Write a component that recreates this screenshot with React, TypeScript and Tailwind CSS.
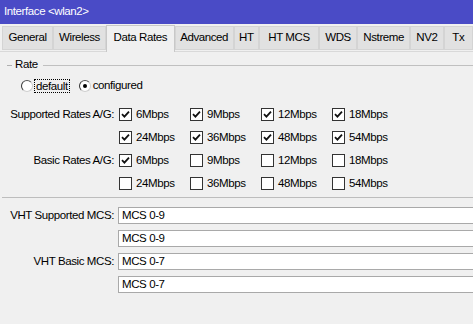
import React from "react";

const font = { fontFamily: '"Liberation Sans", Arial, sans-serif', letterSpacing: "-0.4px" };

function Check({ checked }: { checked: boolean }) {
  return (
    <div className="w-[13px] h-[13px] border border-[#333333] bg-white flex items-center justify-center shrink-0">
      {checked && (
        <svg width="9" height="9" viewBox="0 0 9 9">
          <path d="M1 4.2 L3.4 6.6 L8 1.6" fill="none" stroke="#111" strokeWidth="1.8" />
        </svg>
      )}
    </div>
  );
}

function CB({ checked, label }: { checked: boolean; label: string }) {
  return (
    <div className="flex items-center gap-[4px] w-[71px]">
      <Check checked={checked} />
      <span>{label}</span>
    </div>
  );
}

const tabs = ["General", "Wireless", "Data Rates", "Advanced", "HT", "HT MCS", "WDS", "Nstreme", "NV2", "Tx"];
const tabW = [52, 54, 69, 60, 26, 61, 39, 54, 34, 30];

function RateRow({ label, values }: { label: string; values: [string, boolean][] }) {
  return (
    <div className="flex items-center h-[23px]">
      <div className="w-[116px] pr-[2px] text-right whitespace-nowrap">{label}</div>
      <div className="flex ml-[3px]">
        {values.map(([l, c]) => (
          <CB key={l} label={l} checked={c} />
        ))}
      </div>
    </div>
  );
}

function Field({ label, value }: { label: string; value: string }) {
  return (
    <div className="flex items-center h-[23px]">
      <div className="w-[116px] pr-[2px] text-right whitespace-nowrap">{label}</div>
      <div className="ml-[2px] flex-1 h-[17px] bg-white border border-[#a9a9a9] border-r-0 flex items-center pl-[3px]">
        {value}
      </div>
    </div>
  );
}

export default function App() {
  return (
    <div className="w-[473px] h-[324px] bg-[#f0f0f0] text-[11.5px] text-black overflow-hidden" style={font}>
      <div className="h-[24px] bg-[#4a4bc6] text-white flex items-center pl-[4px]">Interface &lt;wlan2&gt;</div>
      <div className="h-[28px] flex items-end pl-[2px] border-b border-[#d9d9d9]">
        {tabs.map((t, i) =>
          t === "Data Rates" ? (
            <div
              key={t}
              className="h-[27px] bg-[#f0f0f0] border border-[#c8c8c8] border-b-0 flex items-center justify-center -mb-px relative z-10"
              style={{ width: tabW[i] + 1 }}
            >
              <span className="-mt-[2px]">{t}</span>
            </div>
          ) : (
            <div
              key={t}
              className="h-[24px] mb-px bg-[#e1e1e1] border border-[#d4d4d4] flex items-center justify-center"
              style={{ width: tabW[i] }}
            >
              {t}
            </div>
          )
        )}
      </div>
      <div className="pt-[6px]">
        <div className="flex items-center h-[14px]">
          <div className="ml-[7px] w-[5px] h-px bg-[#b0b0b0]" />
          <span className="ml-[3px]">Rate</span>
          <div className="ml-[5px] flex-1 h-px bg-[#c0c0c0]" />
        </div>
        <div className="flex items-center h-[14px] mt-[7px] pl-[21px]">
          <div className="w-[12px] h-[12px] rounded-full bg-white border border-[#cfcfcf] border-l-[#333] border-t-[#555]" />
          <span className="ml-[1px] px-[1px] border border-dotted border-black leading-[12px]">default</span>
          <div className="ml-[9px] w-[12px] h-[12px] rounded-full bg-white border border-[#cfcfcf] border-l-[#333] border-t-[#555] flex items-center justify-center">
            <div className="w-[4px] h-[4px] rounded-full bg-black" />
          </div>
          <span className="ml-[2px]">configured</span>
        </div>
        <div className="mt-[10px]">
          <RateRow label="Supported Rates A/G:" values={[["6Mbps", true], ["9Mbps", true], ["12Mbps", true], ["18Mbps", true]]} />
          <RateRow label="" values={[["24Mbps", true], ["36Mbps", true], ["48Mbps", true], ["54Mbps", true]]} />
          <RateRow label="Basic Rates A/G:" values={[["6Mbps", true], ["9Mbps", false], ["12Mbps", false], ["18Mbps", false]]} />
          <RateRow label="" values={[["24Mbps", false], ["36Mbps", false], ["48Mbps", false], ["54Mbps", false]]} />
        </div>
        <div className="mt-[2px] ml-[2px] h-px bg-[#bdbdbd]" />
        <div className="mt-[6px]">
          <Field label="VHT Supported MCS:" value="MCS 0-9" />
          <Field label="" value="MCS 0-9" />
          <Field label="VHT Basic MCS:" value="MCS 0-7" />
          <Field label="" value="MCS 0-7" />
        </div>
      </div>
    </div>
  );
}
